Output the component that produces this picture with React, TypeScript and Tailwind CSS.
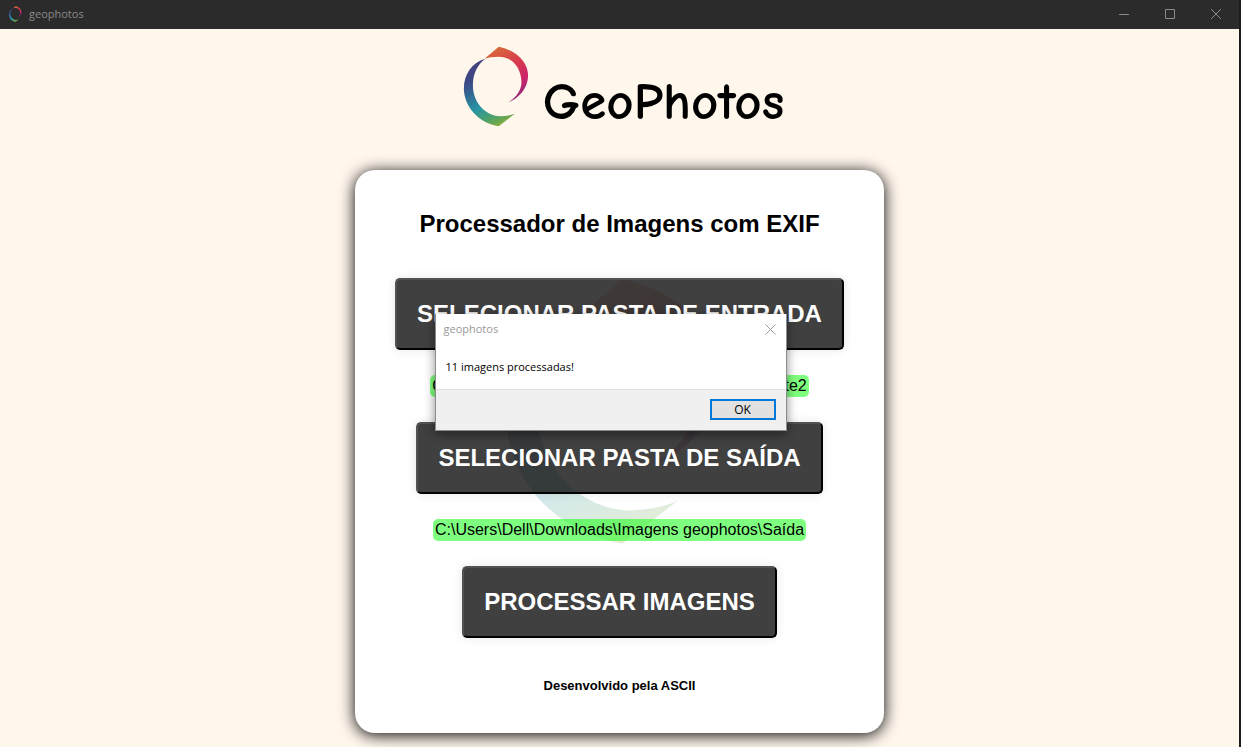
import { useId, type ReactNode } from "react";

function Logo({ className }: { className: string }) {
  const id = useId();
  return (
    <svg viewBox="40 33 208 242" className={className} aria-hidden="true">
      <defs>
        <linearGradient id={`${id}-warm`} gradientUnits="userSpaceOnUse" x1="125" y1="45" x2="205" y2="195">
          <stop offset="0" stopColor="#d9693a" />
          <stop offset="0.4" stopColor="#d83a4e" />
          <stop offset="0.7" stopColor="#cc2468" />
          <stop offset="1" stopColor="#8a2a80" />
        </linearGradient>
        <linearGradient id={`${id}-cool`} gradientUnits="userSpaceOnUse" x1="80" y1="75" x2="165" y2="265">
          <stop offset="0" stopColor="#46407c" />
          <stop offset="0.25" stopColor="#3a4a86" />
          <stop offset="0.65" stopColor="#2795a4" />
          <stop offset="0.85" stopColor="#4fa266" />
          <stop offset="1" stopColor="#84ac3c" />
        </linearGradient>
      </defs>
      <path
        fill={`url(#${id}-cool)`}
        d="M106 71C66 82 42 118 42 160C43 217 88 263 146 273L195 235C180 241 165 243 150 243C104 240 69 200 69 150C69 115 84 87 106 71Z"
      />
      <path
        fill={`url(#${id}-warm)`}
        d="M103 72L146 35C199 46 234 82 234 122C233 160 207 188 175 202C201 184 215 163 214 138C212 95 185 65 145 65C130 65 114 67 103 72Z"
      />
    </svg>
  );
}

function ActionButton({ children }: { children: ReactNode }) {
  return (
    <button
      type="button"
      className="rounded-[5px] border-2 border-t-[#525252] border-l-[#525252] border-r-black border-b-black bg-black/75 p-5 text-2xl leading-7 font-bold whitespace-nowrap text-white uppercase shadow-[0_0_10px_rgba(0,0,0,0.1)]"
    >
      {children}
    </button>
  );
}

function FolderPath({ children }: { children: ReactNode }) {
  return <p className="rounded-[5px] bg-[#00ff00]/50 px-0.5 py-px text-base leading-5 whitespace-nowrap">{children}</p>;
}

function TitleBar() {
  return (
    <header className="flex h-[29px] items-start justify-between bg-[#2b2b2b] text-[#8a8a8a]">
      <div className="flex h-7 items-center gap-1.5 pl-2 font-['Open_Sans','Noto_Sans',sans-serif] text-[11px]">
        <Logo className="h-4 w-[15px]" />
        <span>geophotos</span>
      </div>
      <div className="flex">
        <button type="button" aria-label="Minimizar" className="flex h-[27px] w-[46px] items-center justify-center">
          <svg width="10" height="10" viewBox="0 0 10 10" stroke="currentColor">
            <path d="M0 5.5h10" />
          </svg>
        </button>
        <button type="button" aria-label="Maximizar" className="flex h-[27px] w-[46px] items-center justify-center">
          <svg width="10" height="10" viewBox="0 0 10 10" stroke="currentColor" fill="none">
            <path d="M.5.5h9v9h-9z" />
          </svg>
        </button>
        <button type="button" aria-label="Fechar" className="flex h-[27px] w-[46px] items-center justify-center">
          <svg width="10" height="10" viewBox="0 0 10 10" stroke="currentColor">
            <path d="M0 0l10 10M10 0L0 10" />
          </svg>
        </button>
      </div>
    </header>
  );
}

function MessageDialog() {
  return (
    <div
      role="dialog"
      aria-label="geophotos"
      className="absolute top-[314px] left-1/2 -ml-[185px] w-[352px] border border-t-0 border-[#8c8c8c] bg-white font-['Open_Sans','Noto_Sans',sans-serif] text-[11px] leading-4 shadow-[0_3px_10px_rgba(0,0,0,0.45)]"
    >
      <div className="flex items-center justify-between pt-[7px] pr-2.5 pl-2 text-[#999999]">
        <span>geophotos</span>
        <button type="button" aria-label="Fechar">
          <svg width="11" height="11" viewBox="0 0 11 11" stroke="currentColor">
            <path d="M.5.5l10 10M10.5.5l-10 10" />
          </svg>
        </button>
      </div>
      <p className="px-2.5 pt-[22px] pb-3.5">11 imagens processadas!</p>
      <div className="flex justify-end border-t border-[#dfdfdf] bg-[#f0f0f0] px-2.5 pt-[9px] pb-2.5">
        <button type="button" className="h-[21px] w-[66px] border-2 border-[#0078d7] bg-[#e1e1e1] text-xs leading-4">
          OK
        </button>
      </div>
    </div>
  );
}

export default function App() {
  return (
    <div className="relative flex min-h-screen flex-col border-r-2 border-[#1c1c1c] bg-[#fff6ec] font-['Liberation_Sans',Arial,sans-serif] text-black">
      <TitleBar />
      <main className="flex flex-col items-center pb-3.5">
        <div className="flex items-start pt-[17px] pl-2">
          <Logo className="h-[81px] w-[70px]" />
          <h1 className="pt-6 pl-2.5 font-['Comic_Sans_MS','Comic_Neue',Lato,sans-serif] text-[53px] leading-[64px] font-bold">
            GeoPhotos
          </h1>
        </div>
        <section className="relative mt-9 rounded-[20px] bg-white p-10 shadow-[0_2px_16px_rgba(0,0,0,1)]">
          <div className="pointer-events-none absolute inset-x-0 top-[107px] flex justify-center opacity-20">
            <Logo className="h-[269px] w-[232px]" />
          </div>
          <div className="relative flex flex-col items-center">
            <h2 className="text-2xl leading-7 font-bold">Processador de Imagens com EXIF</h2>
            <div className="flex flex-col items-center gap-[25px] py-10">
              <ActionButton>Selecionar pasta de entrada</ActionButton>
              <FolderPath>C:\Users\Dell\Downloads\Imagens geophotos\Teste2</FolderPath>
              <ActionButton>Selecionar pasta de saída</ActionButton>
              <FolderPath>C:\Users\Dell\Downloads\Imagens geophotos\Saída</FolderPath>
              <ActionButton>Processar imagens</ActionButton>
            </div>
            <p className="text-[13px] leading-[15px] font-bold">Desenvolvido pela ASCII</p>
          </div>
        </section>
      </main>
      <MessageDialog />
    </div>
  );
}
